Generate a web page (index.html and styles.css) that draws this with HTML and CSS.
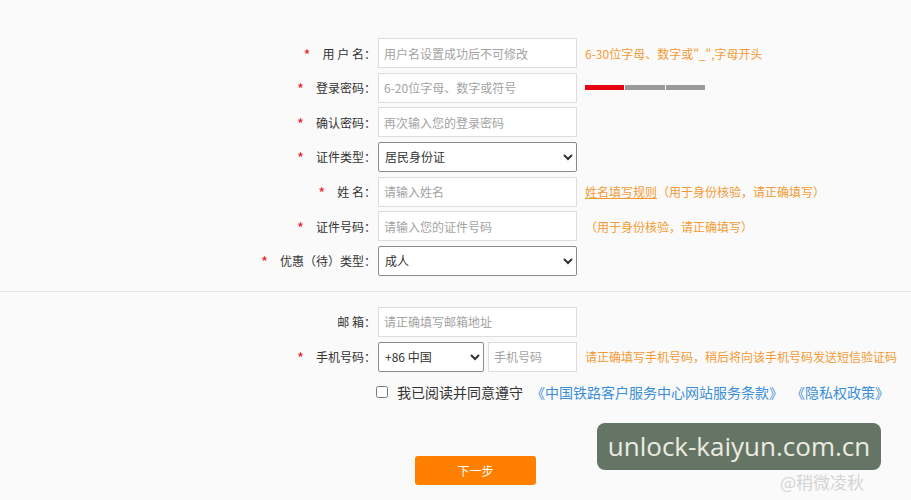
FILE: index.html
```html
<!doctype html>
<html lang="zh-CN">
	<head>
		<meta charset="UTF-8" />
		<title>注册</title>
		<link rel="stylesheet" href="styles.css">
	</head>
	<body>
		<section id="reg">
			<div class="group">
				<div class="row">
					<label class="lbl"><span class="req">*</span>用&nbsp;户&nbsp;名：</label>
					<input class="field" type="text" placeholder="用户名设置成功后不可修改"/>
					<span class="tip">6-30位字母、数字或"_",字母开头</span>
				</div>
				<div class="row">
					<label class="lbl"><span class="req">*</span>登录密码：</label>
					<input class="field" type="password" placeholder="6-20位字母、数字或符号"/>
					<div class="strength">
						<i class="on"></i><i></i><i></i>
					</div>
				</div>
				<div class="row">
					<label class="lbl"><span class="req">*</span>确认密码：</label>
					<input class="field" type="password" placeholder="再次输入您的登录密码"/>
				</div>
				<div class="row">
					<label class="lbl"><span class="req">*</span>证件类型：</label>
					<select class="field">
						<option>居民身份证</option>
						<option>港澳居民居住证</option>
						<option>护照</option>
					</select>
				</div>
				<div class="row">
					<label class="lbl"><span class="req">*</span>姓&nbsp;名：</label>
					<input class="field" type="text" placeholder="请输入姓名"/>
					<span class="tip"><a href="javascript:;">姓名填写规则</a>（用于身份核验，请正确填写）</span>
				</div>
				<div class="row">
					<label class="lbl"><span class="req">*</span>证件号码：</label>
					<input class="field" type="text" placeholder="请输入您的证件号码"/>
					<span class="tip">（用于身份核验，请正确填写）</span>
				</div>
				<div class="row">
					<label class="lbl"><span class="req">*</span>优惠（待）类型：</label>
					<select class="field">
						<option>成人</option>
						<option>儿童</option>
						<option>学生</option>
					</select>
				</div>
			</div>

			<div class="group second">
				<div class="row">
					<label class="lbl">邮&nbsp;箱：</label>
					<input class="field" type="text" placeholder="请正确填写邮箱地址"/>
				</div>
				<div class="row">
					<label class="lbl"><span class="req">*</span>手机号码：</label>
					<select class="field code">
						<option>+86 中国</option>
						<option>+852 中国香港</option>
					</select>
					<input class="field phone" type="text" placeholder="手机号码"/>
					<span class="tip">请正确填写手机号码，稍后将向该手机号码发送短信验证码</span>
				</div>
				<div class="row agree">
					<input type="checkbox" id="agree"/>
					<label for="agree">我已阅读并同意遵守</label>
					<a href="javascript:;">《中国铁路客户服务中心网站服务条款》</a>
					<a href="javascript:;">《隐私权政策》</a>
				</div>
			</div>

			<div class="btns">
				<a href="javascript:;" class="next">下一步</a>
			</div>
		</section>

		<div class="mark">unlock-kaiyun.com.cn</div>
		<div class="mark2">@稍微凌秋</div>
	</body>
</html>
```

FILE: styles.css
```css
*{
	margin: 0;
	padding: 0;
	box-sizing: border-box;
}
body{
	background: #fbfafa;
	font-family: "Noto Sans CJK SC", "Liberation Sans", sans-serif;
	font-size: 12px;
	color: #333;
	width: 911px;
	height: 500px;
	overflow: hidden;
	position: relative;
}
#reg{
	padding-top: 38px;
}
.group{
	display: flex;
	flex-direction: column;
	gap: 4.67px;
	padding-left: 260px;
	padding-bottom: 15px;
	border-bottom: 1px solid #e6e4e4;
}
.group.second{
	padding-top: 15px;
	border-bottom: none;
	gap: 5px;
}
.row{
	display: flex;
	align-items: center;
	height: 30px;
}
.lbl{
	width: 116px;
	text-align: right;
	margin-right: 2px;
	white-space: nowrap;
}
.req{
	color: #e5262b;
	font-size: 15px;
	line-height: 12px;
	margin-right: 12px;
	position: relative;
	top: 2px;
}
.field{
	width: 199px;
	height: 30px;
	border: 1px solid #dedcdc;
	background: #fff;
	padding: 0 5px;
	font-family: inherit;
	font-size: 12px;
	color: #333;
	outline: none;
}
.field::placeholder{
	color: #a3a3a3;
}
select.field{
	border: 1px solid #8c8c8c;
	border-radius: 2px;
	padding: 0 2px;
}
select.code{
	width: 106px;
}
.phone{
	width: 89px;
	margin-left: 4px;
}
.tip{
	margin-left: 8px;
	color: #f29a35;
	white-space: nowrap;
}
.tip a{
	color: #f29a35;
	text-decoration: underline;
}
.strength{
	display: flex;
	gap: 1px;
	margin-left: 8px;
}
.strength i{
	display: block;
	width: 39.3px;
	height: 5px;
	background: #9a9a9a;
}
.strength i.on{
	background: #e60012;
}
.agree{
	padding-left: 116px;
	font-size: 14px;
}
.agree input{
	width: 12px;
	height: 12px;
	margin: 0 9px 0 0;
}
.agree label{
	color: #333;
	margin-right: 8px;
}
.agree a{
	color: #3a8ed8;
	text-decoration: none;
	margin-right: 8px;
}
.btns{
	padding: 34px 0 0 415px;
}
.next{
	display: block;
	width: 121px;
	height: 29px;
	line-height: 29px;
	text-align: center;
	background: #ff8000;
	color: #fff;
	border-radius: 3px;
	text-decoration: none;
	font-size: 12px;
}
.mark{
	position: absolute;
	left: 597px;
	top: 423px;
	width: 284px;
	height: 47px;
	line-height: 47px;
	background: #657565;
	border-radius: 8px;
	color: #ecebe0;
	font-family: "Open Sans", sans-serif;
	font-size: 26px;
	text-align: center;
}
.mark2{
	position: absolute;
	left: 780px;
	top: 471px;
	color: #c4c4c4;
	font-size: 17px;
	line-height: 22px;
	font-family: "Noto Sans CJK SC", sans-serif;
	opacity: 0.7;
}
```
